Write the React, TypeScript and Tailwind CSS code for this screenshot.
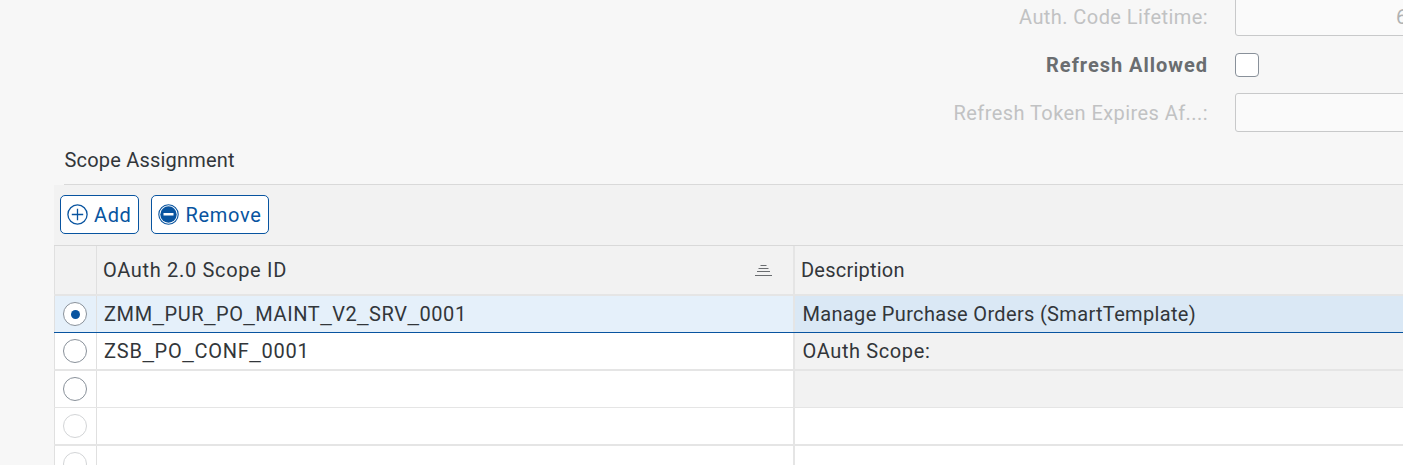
import { Fragment, type ReactNode } from "react";

function Txt({ children, className }: { children: ReactNode; className: string }) {
  return <span className={"block whitespace-nowrap text-[20px] leading-[24px] " + className}>{children}</span>;
}

// Scope ids use a wider underscore than the body face offers.
function ScopeId({ value, className }: { value: string; className: string }) {
  return (
    <Txt className={className}>
      {value.split("_").map((part, i) => (
        <Fragment key={i}>
          {i > 0 && <span className="font-['Liberation_Sans',sans-serif] leading-none">_</span>}
          {part}
        </Fragment>
      ))}
    </Txt>
  );
}

function Radio({ checked, disabled }: { checked?: boolean; disabled?: boolean }) {
  return (
    <span
      role="radio"
      aria-checked={!!checked}
      className={
        "flex size-6 items-center justify-center rounded-full border bg-white " +
        (disabled ? "border-[#d3d5d7]" : "border-[#89919a]")
      }
    >
      {checked && <span className="ml-px size-[9px] rounded-full bg-[#0854a0]" />}
    </span>
  );
}

type RowProps = {
  height: string;
  idBg: string;
  descBg: string;
  id?: ReactNode;
  description?: ReactNode;
  checked?: boolean;
  disabled?: boolean;
};

function Row({ height, idBg, descBg, id, description, checked, disabled }: RowProps) {
  return (
    <div className={"flex shrink-0 border-[#e5e5e5] " + height}>
      <div className={"flex w-[43px] shrink-0 items-start border-x border-[#e0e0e0] pl-2 pt-1.5 " + idBg}>
        <Radio checked={checked} disabled={disabled} />
      </div>
      <div className={"w-[698px] shrink-0 border-r-2 border-[#e5e5e5] pl-[7px] pt-1.5 " + idBg}>{id}</div>
      <div className={"flex-1 pl-[7.5px] pt-1.5 " + descBg}>{description}</div>
    </div>
  );
}

export default function App() {
  return (
    <div className="flex h-[465px] w-[1403px] flex-col overflow-hidden bg-[#f7f7f7] font-['Roboto','Liberation_Sans',sans-serif] text-[#32363a]">
      <div className="flex h-[141px] shrink-0 justify-end overflow-hidden">
        <div className="flex flex-col items-end gap-6 pt-[5px] text-[#c1c2c3]">
          <Txt className="tracking-[0.43px]">Auth. Code Lifetime:</Txt>
          <Txt className="font-bold tracking-[0.98px] text-[#6a6d70]">Refresh Allowed</Txt>
          <Txt className="tracking-[0.43px]">Refresh Token Expires Af...:</Txt>
        </div>
        <div className="ml-[27px] flex w-[168px] shrink-0 flex-col">
          <div className="-mt-[3px] h-[39px] w-[188px] rounded-[3px] border border-[#c8c9ca] bg-[#fafafa] pl-[160px] pt-[7px]">
            <Txt className="text-[#b0b2b3]">600</Txt>
          </div>
          <div className="mt-[17px] size-6 rounded-[4px] border border-[#89919a] bg-white" />
          <div className="mt-4 h-[39px] w-[188px] rounded-[3px] border border-[#c8c9ca] bg-[#fafafa]" />
        </div>
      </div>

      <div className="ml-16 flex h-11 shrink-0 items-start border-b border-[#d9d9d9] pl-[0.5px] pt-[7px]">
        <Txt className="tracking-[0.2px]">Scope Assignment</Txt>
      </div>

      <div className="ml-[54px] flex min-h-0 flex-1 flex-col">
        <div className="flex h-[60px] shrink-0 gap-3 bg-[#f2f2f2] pl-1.5 pt-2.5 text-[#0854a0]">
          <button className="flex h-[39px] w-[79px] items-center rounded-[5px] border border-[#0854a0] bg-white pl-1.5">
            <svg width="21" height="21" viewBox="0 0 21 21" fill="none" stroke="currentColor">
              <circle cx="10.5" cy="10.5" r="9.6" strokeWidth="1.3" />
              <path d="M10.5 4.8v11.4M4.8 10.5h11.4" strokeWidth="1.3" />
            </svg>
            <Txt className="ml-[6px] tracking-[0.6px]">Add</Txt>
          </button>
          <button className="flex h-[39px] w-[118px] items-center rounded-[5px] border border-[#0854a0] bg-white pl-1.5">
            <svg width="21" height="21" viewBox="0 0 21 21" fill="none">
              <circle cx="10.5" cy="10.5" r="9.7" stroke="currentColor" strokeWidth="1.1" />
              <circle cx="10.5" cy="10.5" r="8.2" fill="currentColor" />
              <rect x="5.5" y="9" width="10" height="2.5" fill="white" />
            </svg>
            <Txt className="ml-[6.5px] tracking-[0.7px]">Remove</Txt>
          </button>
        </div>

        <div className="flex h-[51px] shrink-0 border-b-2 border-t border-b-[#e5e5e5] border-t-[#d9d9d9] bg-[#f2f2f2]">
          <div className="w-[43px] shrink-0 border-x border-[#e0e0e0]" />
          <div className="flex w-[698px] shrink-0 items-center justify-between border-r-2 border-[#e5e5e5] pl-[6px] pr-[21px]">
            <Txt className="tracking-[0.67px]">OAuth 2.0 Scope ID</Txt>
            <svg width="17" height="12" viewBox="0 0 17 12" stroke="#6a6d70" strokeWidth="1">
              <path d="M5.5 1.5h6M3.5 4.5h10M2 7.5h13M0 11.5h17" />
            </svg>
          </div>
          <div className="flex items-center pl-[6px]">
            <Txt className="tracking-[0.22px]">Description</Txt>
          </div>
        </div>

        <Row
          height="h-[36px]"
          idBg="bg-[#e5f0fa]"
          descBg="bg-[#dae8f5]"
          checked
          id={<ScopeId className="tracking-[0.61px]" value="ZMM_PUR_PO_MAINT_V2_SRV_0001" />}
          description={<Txt className="tracking-[0.33px]">Manage Purchase Orders (SmartTemplate)</Txt>}
        />
        <div className="h-px shrink-0 bg-[#0854a0]" />
        <Row
          height="h-[38px] border-b-2"
          idBg="bg-white"
          descBg="bg-[#f2f2f2]"
          id={<ScopeId className="tracking-[0.77px]" value="ZSB_PO_CONF_0001" />}
          description={<Txt className="tracking-[0.62px]">OAuth Scope:</Txt>}
        />
        <Row height="h-[37px] border-b" idBg="bg-white" descBg="bg-[#f2f2f2]" />
        <Row height="h-[38px] border-b-2" idBg="bg-white" descBg="bg-white" disabled />
        <Row height="h-[37px] border-b" idBg="bg-white" descBg="bg-white" disabled />
      </div>
    </div>
  );
}
